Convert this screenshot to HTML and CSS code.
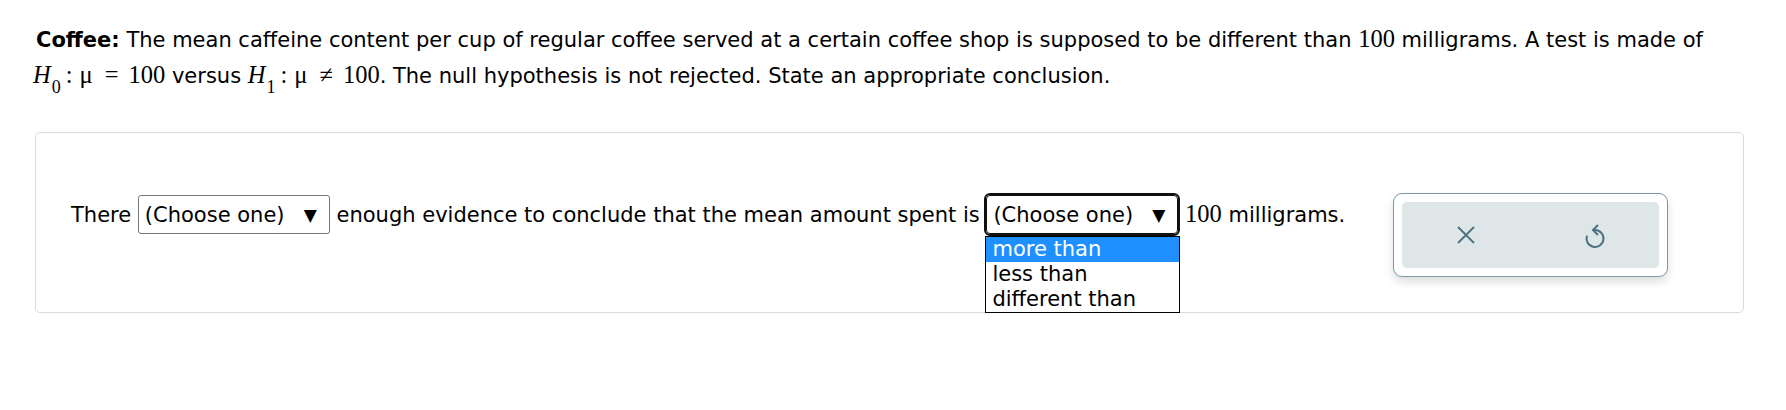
FILE: index.html
```html
<!DOCTYPE html>
<html lang="en">
<head>
<meta charset="utf-8">
<title>Coffee hypothesis test</title>
<link rel="stylesheet" href="styles.css">
</head>
<body>
<div class="page">
  <p class="prompt"><b>Coffee:</b> The mean caffeine content per cup of regular coffee served at a certain coffee shop is supposed to be different than <span class="m">100</span> milligrams. A test is made of <span class="m first"><i class="mi">H</i><sub>0</sub><span class="rel colon">:</span>μ<span class="rel">=</span>100</span> versus <span class="m"><i class="mi">H</i><sub>1</sub><span class="rel colon">:</span>μ<span class="rel">≠</span>100</span>. The null hypothesis is not rejected. State an appropriate conclusion.</p>

  <div class="card">
    <div class="answer">There <span class="select"><span class="select-text">(Choose one)</span><span class="arrow">▼</span></span> enough evidence to conclude that the mean amount spent is <span class="select-wrap"><span class="select focused"><span class="select-text">(Choose one)</span><span class="arrow">▼</span></span><span class="listbox"><span class="option selected">more than</span><span class="option">less than</span><span class="option">different than</span></span></span> <span class="m">100</span> milligrams.</div>
    <div class="tools">
      <div class="tools-inner">
        <button class="tool" type="button" aria-label="Clear">
          <svg width="20" height="20" viewBox="0 0 20 20"><path d="M2 2 L18 18 M18 2 L2 18" fill="none" stroke="#4a7282" stroke-width="1.8"/></svg>
        </button>
        <button class="tool" type="button" aria-label="Reset">
          <svg width="22" height="28" viewBox="0 0 22 28"><path d="M14 4 L9 9 L14 14" fill="none" stroke="#4a7282" stroke-width="2"/><path d="M9 9 H11 A8.5 8.5 0 1 1 3.01 14.59" fill="none" stroke="#4a7282" stroke-width="2"/></svg>
        </button>
      </div>
    </div>
  </div>
</div>
</body>
</html>
```

FILE: styles.css
```css
html, body {
  margin: 0;
  padding: 0;
  background: #ffffff;
}

body {
  font-family: "DejaVu Sans", Verdana, sans-serif;
  font-size: 21px;
  color: #000000;
}

.page {
  padding: 22px 42px 0 36px;
}

.prompt {
  margin: 0;
  line-height: 36px;
}

.prompt b {
  font-weight: bold;
}

.m {
  font-family: "Liberation Serif", "Times New Roman", serif;
  font-size: 24.5px;
  line-height: 1;
  white-space: nowrap;
}

.m.first {
  margin-left: -3px;
}

.mi {
  font-style: italic;
}

.m sub {
  font-size: 18px;
  line-height: 1;
  vertical-align: -10px;
  margin-left: 1px;
}

.rel {
  margin: 0 10px 0 12px;
}

.rel.colon {
  margin: 0 7px 0 5px;
}

.card {
  margin: 36px 0 0 -1px;
  border: 1px solid #d3dcdf;
  border-radius: 5px;
  padding: 60px 35px 35px 35px;
  display: flex;
  align-items: flex-start;
}

.answer {
  flex: none;
  margin-top: 2px;
  line-height: 30px;
  white-space: nowrap;
}

.select-wrap {
  position: relative;
  display: inline-block;
}

.select {
  display: inline-flex;
  align-items: center;
  justify-content: space-between;
  box-sizing: border-box;
  width: 192px;
  height: 39px;
  padding: 0 12px 0 6px;
  border: 1px solid #767676;
  border-radius: 3px;
  background: #ffffff;
  line-height: 24px;
}

.select.focused {
  outline: 2px solid #101010;
  outline-offset: 0;
  border-color: #101010;
  border-radius: 4px;
}

.arrow {
  font-size: 17px;
}

.listbox {
  position: absolute;
  left: -1px;
  top: 41px;
  z-index: 2;
  box-sizing: border-box;
  width: 195px;
  border: 1px solid #000000;
  background: #ffffff;
  display: flex;
  flex-direction: column;
}

.option {
  display: block;
  height: 25px;
  line-height: 25px;
  padding-left: 6px;
}

.option.selected {
  background: #1e90ff;
  color: #ffffff;
}

.tools {
  margin-left: 48px;
  border: 1px solid #7c98a2;
  border-radius: 9px;
  background: #ffffff;
  padding: 8px;
  box-shadow: 0 5px 9px rgba(60, 80, 90, 0.18);
}

.tools-inner {
  display: flex;
  width: 257px;
  height: 66px;
  border-radius: 5px;
  background: #dfe6e8;
}

.tool {
  flex: 1;
  display: flex;
  align-items: center;
  justify-content: center;
  border: 0;
  padding: 0;
  margin: 0;
  background: transparent;
  cursor: pointer;
}
```
